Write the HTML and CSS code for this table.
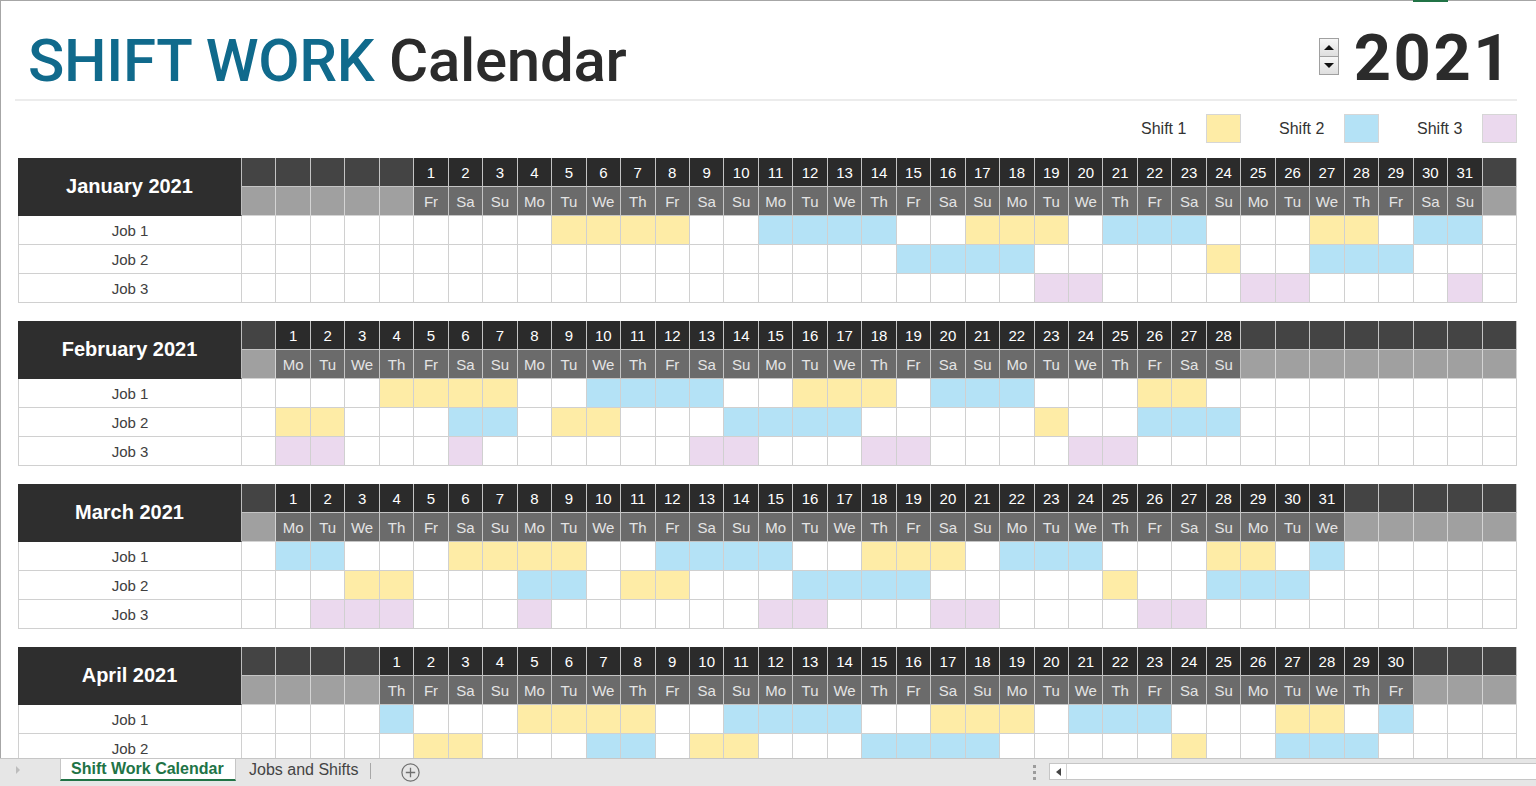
FILE: index.html
```html
<!DOCTYPE html>
<html lang="en">
<head>
<meta charset="utf-8">
<title>Shift Work Calendar</title>
<link rel="stylesheet" href="styles.css">
</head>
<body>
<div class="app">
  <span class="colsel"></span>
  <main class="sheet">
    <header class="topbar">
      <h1 class="title"><span class="t1">SHIFT WORK</span> <span class="t2">Calendar</span></h1>
      <div class="yearbox">
        <div class="spin"><span class="up"><i></i></span><span class="down"><i></i></span></div>
        <div class="year">2021</div>
      </div>
    </header>
    <div class="legend">
      <div class="litem"><span>Shift 1</span><span class="sw y"></span></div>
      <div class="litem"><span>Shift 2</span><span class="sw b"></span></div>
      <div class="litem"><span>Shift 3</span><span class="sw p"></span></div>
    </div>
    <div class="cal">
      <section class="month">
        <span class="mlabel">January 2021</span>
        <span class="hx"></span><span class="hx"></span><span class="hx"></span><span class="hx"></span><span class="hx"></span><span class="hn">1</span><span class="hn">2</span><span class="hn">3</span><span class="hn">4</span><span class="hn">5</span><span class="hn">6</span><span class="hn">7</span><span class="hn">8</span><span class="hn">9</span><span class="hn">10</span><span class="hn">11</span><span class="hn">12</span><span class="hn">13</span><span class="hn">14</span><span class="hn">15</span><span class="hn">16</span><span class="hn">17</span><span class="hn">18</span><span class="hn">19</span><span class="hn">20</span><span class="hn">21</span><span class="hn">22</span><span class="hn">23</span><span class="hn">24</span><span class="hn">25</span><span class="hn">26</span><span class="hn">27</span><span class="hn">28</span><span class="hn">29</span><span class="hn">30</span><span class="hn">31</span><span class="hx"></span>
        <span class="hw"></span><span class="hw"></span><span class="hw"></span><span class="hw"></span><span class="hw"></span><span class="hd">Fr</span><span class="hd">Sa</span><span class="hd">Su</span><span class="hd">Mo</span><span class="hd">Tu</span><span class="hd">We</span><span class="hd">Th</span><span class="hd">Fr</span><span class="hd">Sa</span><span class="hd">Su</span><span class="hd">Mo</span><span class="hd">Tu</span><span class="hd">We</span><span class="hd">Th</span><span class="hd">Fr</span><span class="hd">Sa</span><span class="hd">Su</span><span class="hd">Mo</span><span class="hd">Tu</span><span class="hd">We</span><span class="hd">Th</span><span class="hd">Fr</span><span class="hd">Sa</span><span class="hd">Su</span><span class="hd">Mo</span><span class="hd">Tu</span><span class="hd">We</span><span class="hd">Th</span><span class="hd">Fr</span><span class="hd">Sa</span><span class="hd">Su</span><span class="hw"></span>
        <span class="job">Job 1</span><span></span><span></span><span></span><span></span><span></span><span></span><span></span><span></span><span></span><span class="y"></span><span class="y"></span><span class="y"></span><span class="y"></span><span></span><span></span><span class="b"></span><span class="b"></span><span class="b"></span><span class="b"></span><span></span><span></span><span class="y"></span><span class="y"></span><span class="y"></span><span></span><span class="b"></span><span class="b"></span><span class="b"></span><span></span><span></span><span></span><span class="y"></span><span class="y"></span><span></span><span class="b"></span><span class="b"></span><span></span>
        <span class="job">Job 2</span><span></span><span></span><span></span><span></span><span></span><span></span><span></span><span></span><span></span><span></span><span></span><span></span><span></span><span></span><span></span><span></span><span></span><span></span><span></span><span class="b"></span><span class="b"></span><span class="b"></span><span class="b"></span><span></span><span></span><span></span><span></span><span></span><span class="y"></span><span></span><span></span><span class="b"></span><span class="b"></span><span class="b"></span><span></span><span></span><span></span>
        <span class="job">Job 3</span><span></span><span></span><span></span><span></span><span></span><span></span><span></span><span></span><span></span><span></span><span></span><span></span><span></span><span></span><span></span><span></span><span></span><span></span><span></span><span></span><span></span><span></span><span></span><span class="p"></span><span class="p"></span><span></span><span></span><span></span><span></span><span class="p"></span><span class="p"></span><span></span><span></span><span></span><span></span><span class="p"></span><span></span>
      </section>
      <section class="month">
        <span class="mlabel">February 2021</span>
        <span class="hx"></span><span class="hn">1</span><span class="hn">2</span><span class="hn">3</span><span class="hn">4</span><span class="hn">5</span><span class="hn">6</span><span class="hn">7</span><span class="hn">8</span><span class="hn">9</span><span class="hn">10</span><span class="hn">11</span><span class="hn">12</span><span class="hn">13</span><span class="hn">14</span><span class="hn">15</span><span class="hn">16</span><span class="hn">17</span><span class="hn">18</span><span class="hn">19</span><span class="hn">20</span><span class="hn">21</span><span class="hn">22</span><span class="hn">23</span><span class="hn">24</span><span class="hn">25</span><span class="hn">26</span><span class="hn">27</span><span class="hn">28</span><span class="hx"></span><span class="hx"></span><span class="hx"></span><span class="hx"></span><span class="hx"></span><span class="hx"></span><span class="hx"></span><span class="hx"></span>
        <span class="hw"></span><span class="hd">Mo</span><span class="hd">Tu</span><span class="hd">We</span><span class="hd">Th</span><span class="hd">Fr</span><span class="hd">Sa</span><span class="hd">Su</span><span class="hd">Mo</span><span class="hd">Tu</span><span class="hd">We</span><span class="hd">Th</span><span class="hd">Fr</span><span class="hd">Sa</span><span class="hd">Su</span><span class="hd">Mo</span><span class="hd">Tu</span><span class="hd">We</span><span class="hd">Th</span><span class="hd">Fr</span><span class="hd">Sa</span><span class="hd">Su</span><span class="hd">Mo</span><span class="hd">Tu</span><span class="hd">We</span><span class="hd">Th</span><span class="hd">Fr</span><span class="hd">Sa</span><span class="hd">Su</span><span class="hw"></span><span class="hw"></span><span class="hw"></span><span class="hw"></span><span class="hw"></span><span class="hw"></span><span class="hw"></span><span class="hw"></span>
        <span class="job">Job 1</span><span></span><span></span><span></span><span></span><span class="y"></span><span class="y"></span><span class="y"></span><span class="y"></span><span></span><span></span><span class="b"></span><span class="b"></span><span class="b"></span><span class="b"></span><span></span><span></span><span class="y"></span><span class="y"></span><span class="y"></span><span></span><span class="b"></span><span class="b"></span><span class="b"></span><span></span><span></span><span></span><span class="y"></span><span class="y"></span><span></span><span></span><span></span><span></span><span></span><span></span><span></span><span></span><span></span>
        <span class="job">Job 2</span><span></span><span class="y"></span><span class="y"></span><span></span><span></span><span></span><span class="b"></span><span class="b"></span><span></span><span class="y"></span><span class="y"></span><span></span><span></span><span></span><span class="b"></span><span class="b"></span><span class="b"></span><span class="b"></span><span></span><span></span><span></span><span></span><span></span><span class="y"></span><span></span><span></span><span class="b"></span><span class="b"></span><span class="b"></span><span></span><span></span><span></span><span></span><span></span><span></span><span></span><span></span>
        <span class="job">Job 3</span><span></span><span class="p"></span><span class="p"></span><span></span><span></span><span></span><span class="p"></span><span></span><span></span><span></span><span></span><span></span><span></span><span class="p"></span><span class="p"></span><span></span><span></span><span></span><span class="p"></span><span class="p"></span><span></span><span></span><span></span><span></span><span class="p"></span><span class="p"></span><span></span><span></span><span></span><span></span><span></span><span></span><span></span><span></span><span></span><span></span><span></span>
      </section>
      <section class="month">
        <span class="mlabel">March 2021</span>
        <span class="hx"></span><span class="hn">1</span><span class="hn">2</span><span class="hn">3</span><span class="hn">4</span><span class="hn">5</span><span class="hn">6</span><span class="hn">7</span><span class="hn">8</span><span class="hn">9</span><span class="hn">10</span><span class="hn">11</span><span class="hn">12</span><span class="hn">13</span><span class="hn">14</span><span class="hn">15</span><span class="hn">16</span><span class="hn">17</span><span class="hn">18</span><span class="hn">19</span><span class="hn">20</span><span class="hn">21</span><span class="hn">22</span><span class="hn">23</span><span class="hn">24</span><span class="hn">25</span><span class="hn">26</span><span class="hn">27</span><span class="hn">28</span><span class="hn">29</span><span class="hn">30</span><span class="hn">31</span><span class="hx"></span><span class="hx"></span><span class="hx"></span><span class="hx"></span><span class="hx"></span>
        <span class="hw"></span><span class="hd">Mo</span><span class="hd">Tu</span><span class="hd">We</span><span class="hd">Th</span><span class="hd">Fr</span><span class="hd">Sa</span><span class="hd">Su</span><span class="hd">Mo</span><span class="hd">Tu</span><span class="hd">We</span><span class="hd">Th</span><span class="hd">Fr</span><span class="hd">Sa</span><span class="hd">Su</span><span class="hd">Mo</span><span class="hd">Tu</span><span class="hd">We</span><span class="hd">Th</span><span class="hd">Fr</span><span class="hd">Sa</span><span class="hd">Su</span><span class="hd">Mo</span><span class="hd">Tu</span><span class="hd">We</span><span class="hd">Th</span><span class="hd">Fr</span><span class="hd">Sa</span><span class="hd">Su</span><span class="hd">Mo</span><span class="hd">Tu</span><span class="hd">We</span><span class="hw"></span><span class="hw"></span><span class="hw"></span><span class="hw"></span><span class="hw"></span>
        <span class="job">Job 1</span><span></span><span class="b"></span><span class="b"></span><span></span><span></span><span></span><span class="y"></span><span class="y"></span><span class="y"></span><span class="y"></span><span></span><span></span><span class="b"></span><span class="b"></span><span class="b"></span><span class="b"></span><span></span><span></span><span class="y"></span><span class="y"></span><span class="y"></span><span></span><span class="b"></span><span class="b"></span><span class="b"></span><span></span><span></span><span></span><span class="y"></span><span class="y"></span><span></span><span class="b"></span><span></span><span></span><span></span><span></span><span></span>
        <span class="job">Job 2</span><span></span><span></span><span></span><span class="y"></span><span class="y"></span><span></span><span></span><span></span><span class="b"></span><span class="b"></span><span></span><span class="y"></span><span class="y"></span><span></span><span></span><span></span><span class="b"></span><span class="b"></span><span class="b"></span><span class="b"></span><span></span><span></span><span></span><span></span><span></span><span class="y"></span><span></span><span></span><span class="b"></span><span class="b"></span><span class="b"></span><span></span><span></span><span></span><span></span><span></span><span></span>
        <span class="job">Job 3</span><span></span><span></span><span class="p"></span><span class="p"></span><span class="p"></span><span></span><span></span><span></span><span class="p"></span><span></span><span></span><span></span><span></span><span></span><span></span><span class="p"></span><span class="p"></span><span></span><span></span><span></span><span class="p"></span><span class="p"></span><span></span><span></span><span></span><span></span><span class="p"></span><span class="p"></span><span></span><span></span><span></span><span></span><span></span><span></span><span></span><span></span><span></span>
      </section>
      <section class="month">
        <span class="mlabel">April 2021</span>
        <span class="hx"></span><span class="hx"></span><span class="hx"></span><span class="hx"></span><span class="hn">1</span><span class="hn">2</span><span class="hn">3</span><span class="hn">4</span><span class="hn">5</span><span class="hn">6</span><span class="hn">7</span><span class="hn">8</span><span class="hn">9</span><span class="hn">10</span><span class="hn">11</span><span class="hn">12</span><span class="hn">13</span><span class="hn">14</span><span class="hn">15</span><span class="hn">16</span><span class="hn">17</span><span class="hn">18</span><span class="hn">19</span><span class="hn">20</span><span class="hn">21</span><span class="hn">22</span><span class="hn">23</span><span class="hn">24</span><span class="hn">25</span><span class="hn">26</span><span class="hn">27</span><span class="hn">28</span><span class="hn">29</span><span class="hn">30</span><span class="hx"></span><span class="hx"></span><span class="hx"></span>
        <span class="hw"></span><span class="hw"></span><span class="hw"></span><span class="hw"></span><span class="hd">Th</span><span class="hd">Fr</span><span class="hd">Sa</span><span class="hd">Su</span><span class="hd">Mo</span><span class="hd">Tu</span><span class="hd">We</span><span class="hd">Th</span><span class="hd">Fr</span><span class="hd">Sa</span><span class="hd">Su</span><span class="hd">Mo</span><span class="hd">Tu</span><span class="hd">We</span><span class="hd">Th</span><span class="hd">Fr</span><span class="hd">Sa</span><span class="hd">Su</span><span class="hd">Mo</span><span class="hd">Tu</span><span class="hd">We</span><span class="hd">Th</span><span class="hd">Fr</span><span class="hd">Sa</span><span class="hd">Su</span><span class="hd">Mo</span><span class="hd">Tu</span><span class="hd">We</span><span class="hd">Th</span><span class="hd">Fr</span><span class="hw"></span><span class="hw"></span><span class="hw"></span>
        <span class="job">Job 1</span><span></span><span></span><span></span><span></span><span class="b"></span><span></span><span></span><span></span><span class="y"></span><span class="y"></span><span class="y"></span><span class="y"></span><span></span><span></span><span class="b"></span><span class="b"></span><span class="b"></span><span class="b"></span><span></span><span></span><span class="y"></span><span class="y"></span><span class="y"></span><span></span><span class="b"></span><span class="b"></span><span class="b"></span><span></span><span></span><span></span><span class="y"></span><span class="y"></span><span></span><span class="b"></span><span></span><span></span><span></span>
        <span class="job">Job 2</span><span></span><span></span><span></span><span></span><span></span><span class="y"></span><span class="y"></span><span></span><span></span><span></span><span class="b"></span><span class="b"></span><span></span><span class="y"></span><span class="y"></span><span></span><span></span><span></span><span class="b"></span><span class="b"></span><span class="b"></span><span class="b"></span><span></span><span></span><span></span><span></span><span></span><span class="y"></span><span></span><span></span><span class="b"></span><span class="b"></span><span class="b"></span><span></span><span></span><span></span><span></span>
      </section>
    </div>
  </main>
  <footer class="tabs">
    <div class="nav"><i></i></div>
    <div class="tab active">Shift Work Calendar</div>
    <div class="tab">Jobs and Shifts</div>
    <span class="sep"></span>
    <span class="add"><svg width="19" height="19" viewBox="0 0 19 19"><circle cx="9.5" cy="9.5" r="8.6" fill="none" stroke="#6f6f6f" stroke-width="1.2"/><path d="M9.5 4.8v9.4M4.8 9.5h9.4" stroke="#6f6f6f" stroke-width="1.3"/></svg></span>
    <span class="grow"></span>
    <span class="dots"><i></i><i></i><i></i></span>
    <div class="hscroll"><span class="larrow"><i></i></span></div>
  </footer>
</div>
</body>
</html>
```
FILE: styles.css
```css
* { box-sizing: border-box; }
html, body { margin: 0; height: 100%; }
body {
  font-family: "Liberation Sans", Arial, sans-serif;
  color: #333;
  background: #fff;
}
.app {
  height: 100vh;
  display: flex;
  flex-direction: column;
  position: relative;
  overflow: hidden;
}
.colsel {
  position: absolute;
  top: 0;
  left: 1413px;
  width: 35px;
  height: 2px;
  background: #217346;
  z-index: 2;
}
.sheet {
  flex: 1;
  min-height: 0;
  overflow: hidden;
  border-top: 1px solid #a6a6a6;
  border-left: 1px solid #a6a6a6;
  padding: 0 19px 0 17px;
}
.topbar {
  height: 100px;
  display: flex;
  justify-content: space-between;
  align-items: flex-end;
  padding: 0 0 8px 3px;
  margin-left: -3px;
  border-bottom: 2px solid #ececec;
}
.title {
  margin: 0 0 0 10px;
  font-family: Roboto, "Liberation Sans", sans-serif;
  font-weight: 500;
  font-size: 60px;
  line-height: 60px;
  letter-spacing: -0.3px;
  white-space: nowrap;
}
.t1 { color: #106a8c; }
.t2 { color: #2b2b2b; }
.yearbox {
  display: flex;
  align-items: center;
  gap: 15px;
  margin-right: 4px;
}
.spin {
  display: flex;
  flex-direction: column;
  margin-bottom: 4px;
}
.spin span {
  width: 20px;
  height: 19px;
  border: 1px solid #a0a0a0;
  background: linear-gradient(#f7f7f7, #dedede);
  display: flex;
  align-items: center;
  justify-content: center;
}
.spin span + span { margin-top: -1px; }
.spin i {
  width: 0;
  height: 0;
  border-left: 5px solid transparent;
  border-right: 5px solid transparent;
}
.spin .up i { border-bottom: 5px solid #111; }
.spin .down i { border-top: 5px solid #111; }
.year {
  font-family: Roboto, "Liberation Sans", sans-serif;
  font-weight: 700;
  font-size: 65px;
  line-height: 65px;
  letter-spacing: 2.5px;
  color: #2b2b2b;
}
.legend {
  display: flex;
  justify-content: flex-end;
  gap: 38px;
  margin-top: 13px;
}
.litem {
  width: 100px;
  display: flex;
  justify-content: space-between;
  align-items: center;
  font-size: 16px;
  color: #333;
}
.sw {
  width: 35px;
  height: 29px;
  border: 1px solid #d6d6d6;
}
.cal { margin-top: 15px; }
.month {
  width: 1499px;
  display: grid;
  grid-template-columns: 224px repeat(37, 1fr);
  grid-auto-rows: 29px;
  margin-bottom: 18px;
}
.month > span {
  border-right: 1px solid #d0d0d0;
  border-bottom: 1px solid #d0d0d0;
  display: flex;
  align-items: center;
  justify-content: center;
  font-size: 15px;
  white-space: nowrap;
}
.month > .mlabel {
  grid-row: span 2;
  background: #2e2e2e;
  color: #fff;
  font-weight: 700;
  font-size: 20px;
  border-bottom-color: #2e2e2e;
  border-right-color: #bdbdbd;
}
.month > .hx { background: #444; border-color: #c4c4c4; }
.month > .hn { background: #2b2b2b; color: #fff; border-color: #c4c4c4; }
.month > .hd { background: #6b6b6b; color: #e4e4e4; border-color: #c4c4c4; }
.month > .hw { background: #a0a0a0; border-color: #d4d4d4; }
.month > .job {
  border-left: 1px solid #d0d0d0;
  color: #404040;
}
.y { background: #feeca6; }
.b { background: #b4e2f6; }
.p { background: #ebd9ee; }

.tabs {
  flex: none;
  height: 28px;
  background: #e6e6e6;
  border-top: 1px solid #c6c6c6;
  display: flex;
  align-items: flex-start;
}
.nav {
  width: 60px;
  height: 22px;
  display: flex;
  align-items: center;
  padding-left: 16px;
}
.nav i {
  width: 0;
  height: 0;
  border-left: 4px solid #bdbdbd;
  border-top: 4px solid transparent;
  border-bottom: 4px solid transparent;
}
.tab {
  height: 22px;
  display: flex;
  align-items: center;
  font-size: 16px;
  color: #444;
  padding: 0 12px 0 13px;
  white-space: nowrap;
}
.tab.active {
  width: 176px;
  padding: 0 0 0 10px;
  background: #fff;
  color: #217346;
  font-weight: 700;
  border-left: 1px solid #c6c6c6;
  border-right: 1px solid #c6c6c6;
  border-bottom: 2px solid #217346;
}
.sep {
  width: 1px;
  height: 16px;
  margin-top: 4px;
  background: #a8a8a8;
}
.add {
  margin: 4px 0 0 30px;
  display: flex;
}
.grow { flex: 1; }
.dots {
  display: flex;
  flex-direction: column;
  gap: 3px;
  margin: 6px 13px 0 0;
}
.dots i {
  width: 3px;
  height: 3px;
  background: #9c9c9c;
}
.hscroll {
  width: 487px;
  height: 17px;
  margin-top: 4px;
  background: #fff;
  border: 1px solid #c6c6c6;
  border-right: 0;
  display: flex;
}
.larrow {
  width: 17px;
  border-right: 1px solid #d4d4d4;
  display: flex;
  align-items: center;
  justify-content: center;
}
.larrow i {
  width: 0;
  height: 0;
  border-right: 5px solid #444;
  border-top: 4px solid transparent;
  border-bottom: 4px solid transparent;
}
```
